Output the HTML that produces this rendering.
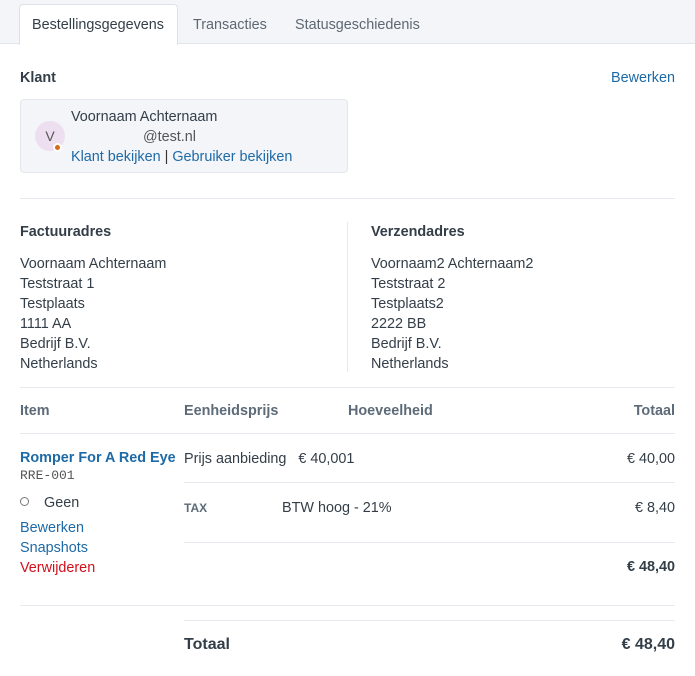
<!DOCTYPE html>
<html><head><meta charset="utf-8"><style>
*{margin:0;padding:0;box-sizing:border-box}
body{width:695px;height:676px;background:#fff;font-family:"Liberation Sans",Helvetica,Arial,sans-serif;font-size:14.4px;color:#333e48;position:relative;overflow:hidden}
.a{position:absolute;white-space:nowrap;line-height:20px;margin-top:1px}
.b{font-weight:bold}
.l{color:#1e6aa6}
.h{position:absolute;height:1px;background:#e6e9ee}
.hd{font-weight:bold;color:#5d6b78}
</style></head><body>
<div style="position:absolute;left:0;top:0;width:695px;height:44px;background:#f3f5f9;border-bottom:1px solid #e1e5eb"></div>
<div style="position:absolute;left:19px;top:4px;width:159px;height:41px;background:#fff;border:1px solid #dde2e9;border-bottom:none;border-radius:4px 4px 0 0"></div>
<div class="a" style="left:32px;top:14px;color:#333e48">Bestellingsgegevens</div>
<div class="a" style="left:193px;top:14px;color:#5d6872">Transacties</div>
<div class="a" style="left:295px;top:14px;color:#5d6872">Statusgeschiedenis</div>

<div class="a b" style="left:20px;top:67px">Klant</div>
<div class="a l" style="right:20px;top:67px">Bewerken</div>
<div style="position:absolute;left:20px;top:99px;width:328px;height:74px;background:#f3f5f9;border:1px solid #e4e8ee;border-radius:4px"></div>
<div style="position:absolute;left:35px;top:121px;width:30px;height:30px;border-radius:50%;background:#eedff0;color:#555;text-align:center;line-height:30px;font-size:14px">V</div>
<div style="position:absolute;left:53px;top:143px;width:9px;height:9px;border-radius:50%;background:#d86a12;border:2px solid #fff"></div>
<div class="a" style="left:71px;top:106px">Voornaam Achternaam</div>
<div class="a" style="left:143px;top:126px;color:#555">@test.nl</div>
<div class="a l" style="left:71px;top:146px">Klant bekijken <span style="color:#333">|</span> Gebruiker bekijken</div>

<div class="h" style="left:20px;top:198px;width:655px"></div>
<div style="position:absolute;left:347px;top:222px;width:1px;height:150px;background:#e6e9ee"></div>
<div class="a b" style="left:20px;top:221px">Factuuradres</div>
<div class="a" style="left:20px;top:253px;line-height:20px">Voornaam Achternaam<br>Teststraat 1<br>Testplaats<br>1111 AA<br>Bedrijf B.V.<br>Netherlands</div>
<div class="a b" style="left:371px;top:221px">Verzendadres</div>
<div class="a" style="left:371px;top:253px;line-height:20px">Voornaam2 Achternaam2<br>Teststraat 2<br>Testplaats2<br>2222 BB<br>Bedrijf B.V.<br>Netherlands</div>

<div class="h" style="left:20px;top:387px;width:655px"></div>
<div class="a hd" style="left:20px;top:400px">Item</div>
<div class="a hd" style="left:184px;top:400px">Eenheidsprijs</div>
<div class="a hd" style="left:348px;top:400px">Hoeveelheid</div>
<div class="a hd" style="right:20px;top:400px">Totaal</div>
<div class="h" style="left:20px;top:433px;width:655px"></div>

<div class="a b l" style="left:20px;top:447px">Romper For A Red Eye</div>
<div class="a" style="left:20px;top:465px;font-family:'Liberation Mono',monospace;font-size:13px;color:#555">RRE-001</div>
<div style="position:absolute;left:20px;top:497px;width:9px;height:9px;border-radius:50%;border:1px solid #777"></div>
<div class="a" style="left:44px;top:492px">Geen</div>
<div class="a l" style="left:20px;top:517px">Bewerken</div>
<div class="a l" style="left:20px;top:537px">Snapshots</div>
<div class="a" style="left:20px;top:557px;color:#d0101b">Verwijderen</div>

<div class="a" style="left:184px;top:448px">Prijs aanbieding&nbsp;&nbsp;&nbsp;€ 40,001</div>
<div class="a" style="right:20px;top:448px">€ 40,00</div>
<div class="h" style="left:184px;top:482px;width:491px"></div>
<div class="a hd" style="left:184px;top:497px;font-size:12px">TAX</div>
<div class="a" style="left:282px;top:497px">BTW hoog - 21%</div>
<div class="a" style="right:20px;top:497px">€ 8,40</div>
<div class="h" style="left:184px;top:542px;width:491px"></div>
<div class="a b" style="right:20px;top:556px">€ 48,40</div>
<div class="h" style="left:20px;top:605px;width:655px"></div>
<div class="h" style="left:184px;top:620px;width:491px"></div>
<div class="a b" style="left:184px;top:634px;font-size:16px">Totaal</div>
<div class="a b" style="right:20px;top:634px;font-size:16px">€ 48,40</div>
</body></html>
